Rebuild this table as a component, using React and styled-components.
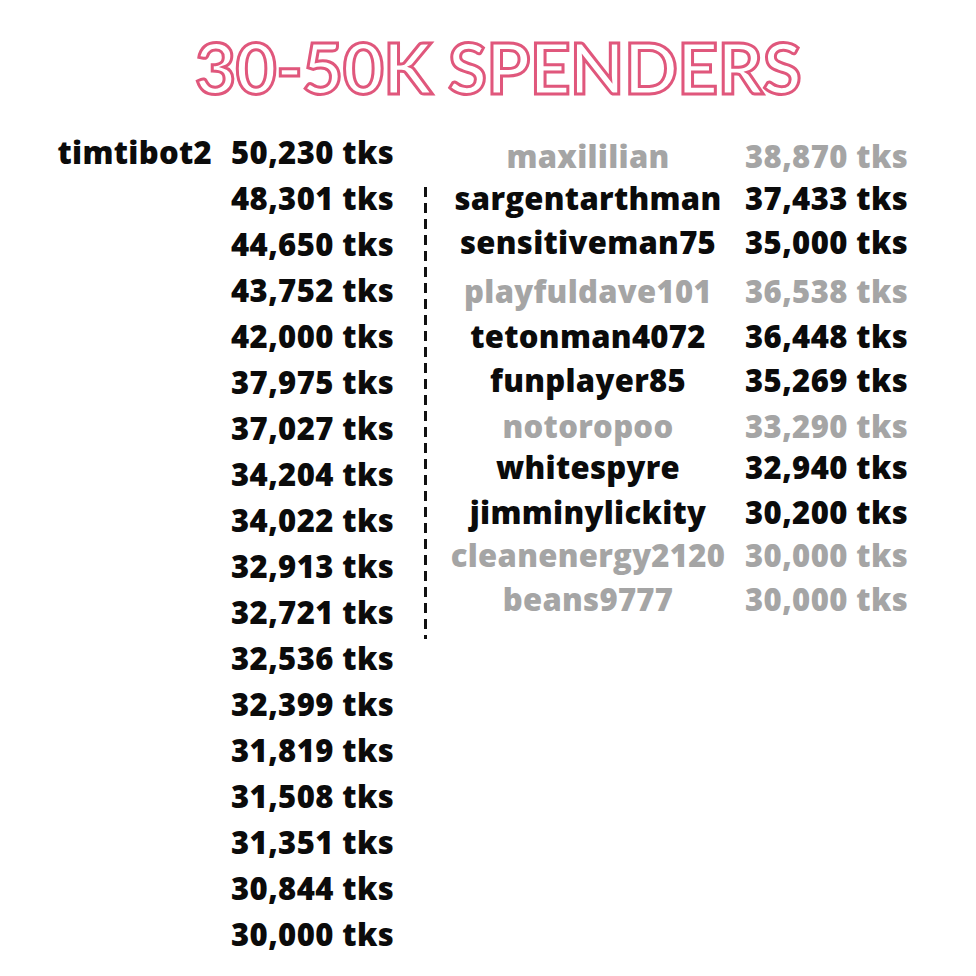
import styled, { createGlobalStyle } from "styled-components";

const GlobalStyle = createGlobalStyle`
  body {
    margin: 0;
    background: #ffffff;
    font-family: "Open Sans", "Liberation Sans", sans-serif;
  }
`;

const Page = styled.main`
  width: 976px;
  height: 976px;
  overflow: hidden;
  background: #ffffff;
`;

const Title = styled.h1`
  margin: 31px 0 0;
  padding-left: 20px;
  text-align: center;
  font-family: Lato, "Open Sans", sans-serif;
  font-weight: 700;
  font-size: 71px;
  line-height: 71px;
  letter-spacing: -0.6px;
  color: #ffffff;
  -webkit-text-stroke: 3px #e0577c;
`;

const Board = styled.section`
  display: flex;
  align-items: flex-start;
  margin-top: 27px;
`;

const LeftTable = styled.div`
  display: grid;
  grid-template-columns: 212px 176px;
  column-gap: 19px;
  line-height: 46px;
`;

const Name = styled.span`
  font-size: 31px;
  font-weight: 800;
  letter-spacing: 0.3px;
  color: ${(p) => (p.$muted ? "#a5a5a5" : "#0b0b0b")};
  text-align: ${(p) => p.$align || "right"};
  white-space: nowrap;
`;

const Amount = styled.span`
  font-size: 31px;
  font-weight: 800;
  letter-spacing: 0.4px;
  color: ${(p) => (p.$muted ? "#a5a5a5" : "#0b0b0b")};
  white-space: nowrap;
`;

const Divider = styled.div`
  width: 3px;
  height: 452px;
  margin: 58px 21px 0 17px;
  background: repeating-linear-gradient(
    to bottom,
    #111111 0,
    #111111 10px,
    transparent 10px,
    transparent 16px
  );
`;

const RightTable = styled.div`
  display: flex;
  flex-direction: column;
  padding-top: 5px;
`;

const RightRow = styled.div`
  display: grid;
  grid-template-columns: 280px 176px;
  column-gap: 17px;
  line-height: 44px;
  margin-top: ${(p) => p.$nudge || 0}px;
`;

const leftRows = [
  ["timtibot2", "50,230"],
  ["", "48,301"],
  ["", "44,650"],
  ["", "43,752"],
  ["", "42,000"],
  ["", "37,975"],
  ["", "37,027"],
  ["", "34,204"],
  ["", "34,022"],
  ["", "32,913"],
  ["", "32,721"],
  ["", "32,536"],
  ["", "32,399"],
  ["", "31,819"],
  ["", "31,508"],
  ["", "31,351"],
  ["", "30,844"],
  ["", "30,000"],
];

const rightRows = [
  { name: "maxililian", tks: "38,870", muted: true, nudge: 0 },
  { name: "sargentarthman", tks: "37,433", nudge: -2 },
  { name: "sensitiveman75", tks: "35,000", nudge: 0 },
  { name: "playfuldave101", tks: "36,538", muted: true, nudge: 5 },
  { name: "tetonman4072", tks: "36,448", nudge: 1 },
  { name: "funplayer85", tks: "35,269", nudge: 0 },
  { name: "notoropoo", tks: "33,290", muted: true, nudge: 2 },
  { name: "whitespyre", tks: "32,940", nudge: -3 },
  { name: "jimminylickity", tks: "30,200", nudge: 1 },
  { name: "cleanenergy2120", tks: "30,000", muted: true, nudge: -1 },
  { name: "beans9777", tks: "30,000", muted: true, nudge: 0 },
];

export default function App() {
  return (
    <Page>
      <GlobalStyle />
      <Title>30-50K SPENDERS</Title>
      <Board>
        <LeftTable>
          {leftRows.map(([name, tks], i) => [
            <Name key={`n${i}`}>{name}</Name>,
            <Amount key={`a${i}`}>{tks} tks</Amount>,
          ])}
        </LeftTable>
        <Divider />
        <RightTable>
          {rightRows.map((r) => (
            <RightRow key={r.name} $nudge={r.nudge}>
              <Name $align="center" $muted={r.muted}>
                {r.name}
              </Name>
              <Amount $muted={r.muted}>{r.tks} tks</Amount>
            </RightRow>
          ))}
        </RightTable>
      </Board>
    </Page>
  );
}
